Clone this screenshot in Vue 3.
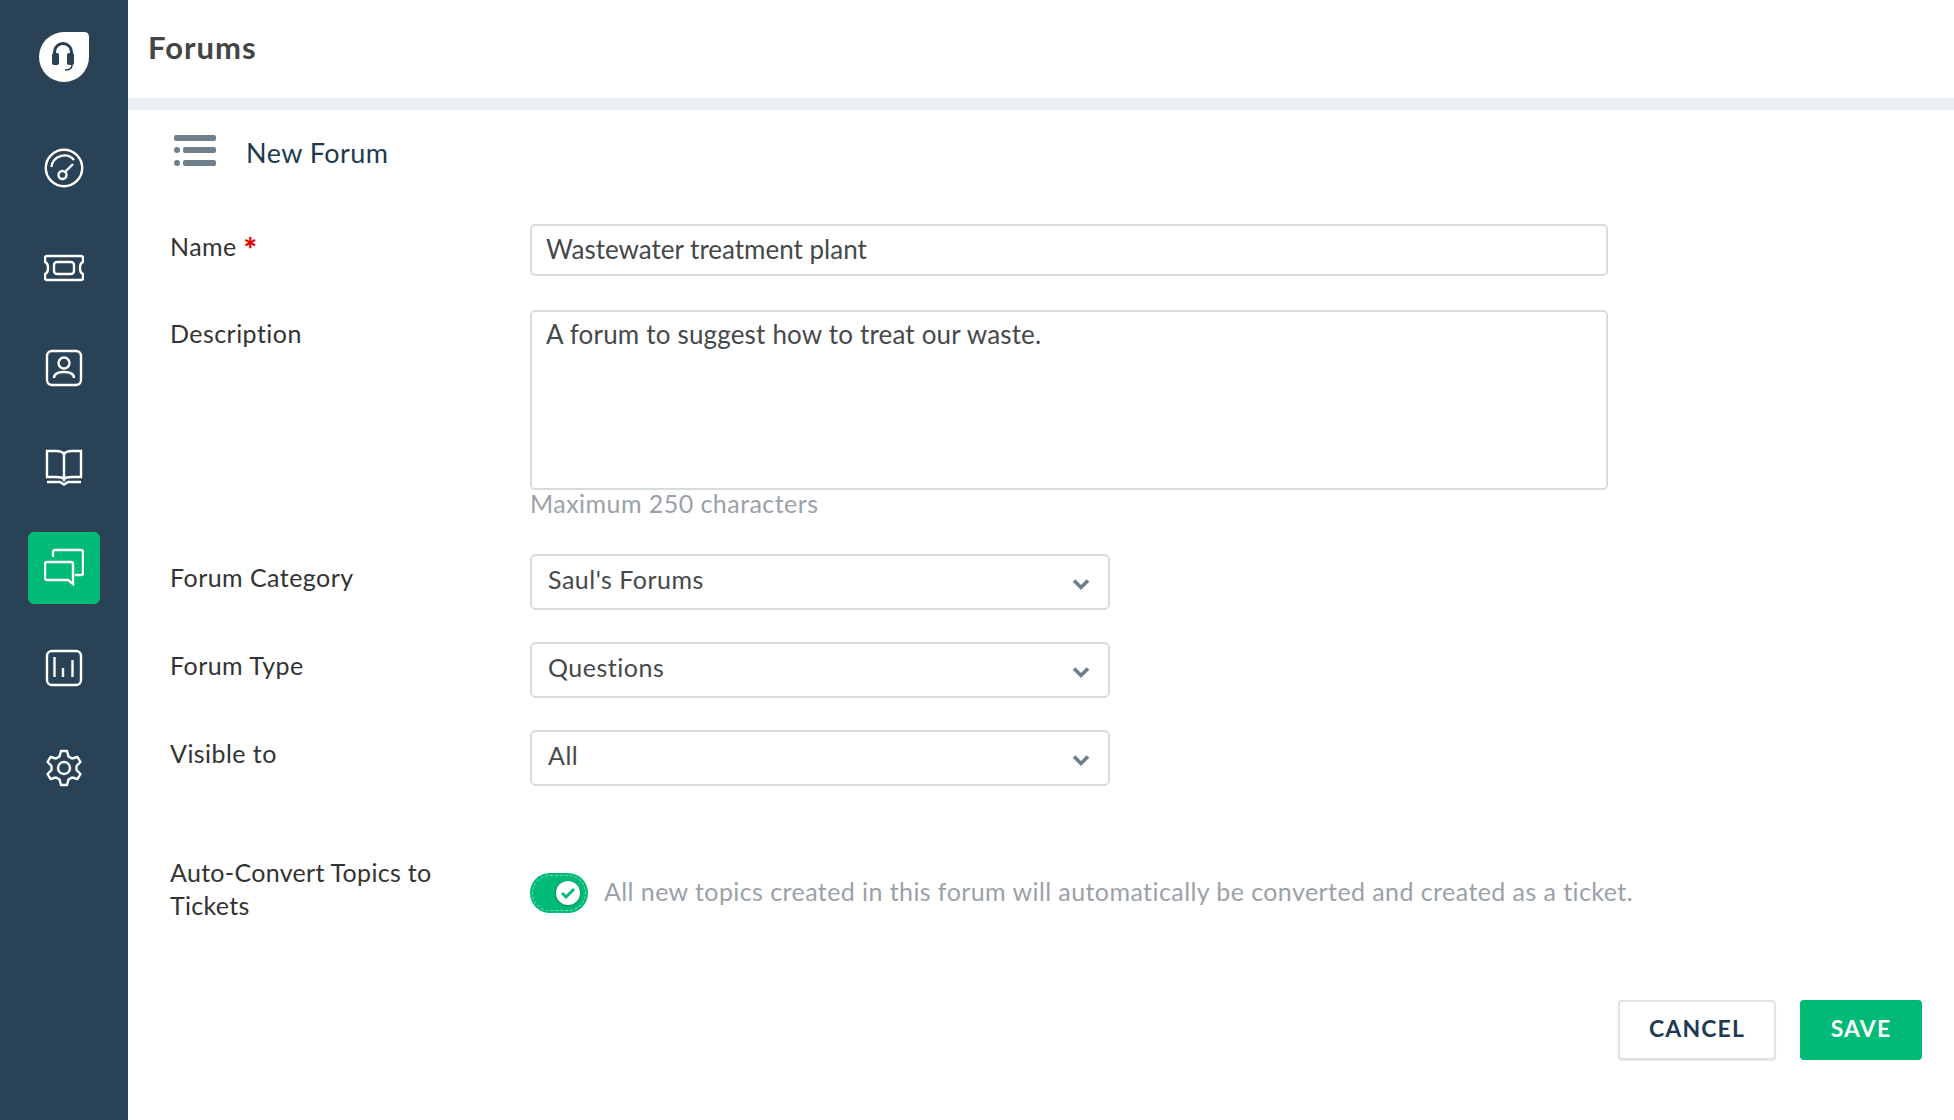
<script setup>
const selects = [
  { label: 'Forum Category', value: "Saul's Forums" },
  { label: 'Forum Type', value: 'Questions' },
  { label: 'Visible to', value: 'All' }
]
</script>

<template>
  <div class="app">
    <aside class="side">
      <div class="logo">
        <svg width="50" height="50" viewBox="0 0 50 50">
          <path d="M25 0H45Q50 0 50 5V25A25 25 0 0 1 0 25A25 25 0 0 1 25 0Z" fill="#fff"/>
          <path d="M15.500 27V20A8.500 8.500 0 0 1 32.500 20V27" fill="none" stroke="#2a4256" stroke-width="3"/>
          <rect x="13" y="21" width="7" height="12" rx="2" fill="#2a4256"/>
          <rect x="28" y="21" width="7" height="12" rx="2" fill="#2a4256"/>
          <path d="M33 33Q33 38 26 38" fill="none" stroke="#2a4256" stroke-width="1.500"/>
        </svg>
      </div>
      <nav class="nav">
        <a class="item">
          <svg class="ic" viewBox="0 0 40 40"><circle cx="20" cy="20" r="18.200"/><path d="M7.500 19A12.800 12.800 0 0 1 30 12"/><circle cx="18.500" cy="27" r="4"/><path d="M21 24L29 16"/></svg>
        </a>
        <a class="item">
          <svg class="ic" viewBox="0 0 40 40"><path d="M3 8H37Q39 8 39 10V14Q36 15 36 20T39 26V30Q39 32 37 32H3Q1 32 1 30V26Q4 25 4 20T1 14V10Q1 8 3 8Z"/><rect x="10" y="14" width="20" height="12" rx="3"/></svg>
        </a>
        <a class="item">
          <svg class="ic" viewBox="0 0 40 40"><rect x="3" y="3" width="34" height="34" rx="5"/><circle cx="20" cy="15" r="5.500"/><path d="M10 30Q10 24 20 24T30 30"/></svg>
        </a>
        <a class="item">
          <svg class="ic" viewBox="0 0 40 40"><path d="M3 3H12Q18 3 20 6V31Q18 29 12 29H3ZM37 3H28Q22 3 20 6V31Q22 29 28 29H37Z"/><path d="M3 34H16L20 36.500L24 34H37"/></svg>
        </a>
        <a class="item active">
          <svg class="ic" viewBox="0 0 40 40"><path d="M9 9V4Q9 2 11 2H37Q39 2 39 4V25Q39 27 37 27H31"/><path d="M3 14H27Q29 14 29 16V36L24 32H3Q1 32 1 30V16Q1 14 3 14Z"/></svg>
        </a>
        <a class="item">
          <svg class="ic" viewBox="0 0 40 40"><rect x="3" y="3" width="34" height="34" rx="5"/><path d="M10.500 9V29M19 20V29M28.500 12V29"/></svg>
        </a>
        <a class="item">
          <svg class="ic" viewBox="0 0 40 40"><circle cx="20" cy="20" r="6"/><path d="M17 3H23L24.500 8.500L28 10.500L33.500 9L36.500 14L32.500 18V22L36.500 26L33.500 31L28 29.500L24.500 31.500L23 37H17L15.500 31.500L12 29.500L6.500 31L3.500 26L7.500 22V18L3.500 14L6.500 9L12 10.500L15.500 8.500Z" stroke-linejoin="round"/></svg>
        </a>
      </nav>
    </aside>

    <main class="main">
      <header class="top"><h1>Forums</h1></header>
      <div class="band"></div>
      <section class="body">
        <div class="subhead">
          <svg width="44" height="32" viewBox="0 0 44 32" class="list">
            <rect x="1" y="0" width="42" height="6" rx="2"/>
            <circle cx="4" cy="15" r="3"/><rect x="10" y="12" width="33" height="6" rx="2"/>
            <circle cx="4" cy="28" r="3"/><rect x="10" y="25" width="33" height="6" rx="2"/>
          </svg>
          <h2>New Forum</h2>
        </div>

        <div class="row r-name">
          <label class="lab">Name <span class="req">*</span></label>
          <div class="field text">Wastewater treatment plant</div>
        </div>

        <div class="row r-desc">
          <label class="lab">Description</label>
          <div>
            <div class="field area">A forum to suggest how to treat our waste.</div>
            <p class="hint">Maximum 250 characters</p>
          </div>
        </div>

        <div v-for="s in selects" :key="s.label" class="row r-sel">
          <label class="lab">{{ s.label }}</label>
          <div class="select">
            <span>{{ s.value }}</span>
            <svg width="18" height="14" viewBox="0 0 18 14"><path d="M2 3.500L9 10.500L16 3.500" fill="none" stroke="#6b7f8e" stroke-width="3.600"/></svg>
          </div>
        </div>

        <div class="row r-auto">
          <label class="lab">Auto-Convert Topics to Tickets</label>
          <div class="auto">
            <div class="toggle">
              <span class="knob">
                <svg width="16" height="14" viewBox="0 0 16 14"><path d="M2 7L6 11L14 3" fill="none" stroke="#00ba75" stroke-width="3"/></svg>
              </span>
            </div>
            <span class="auto-text">All new topics created in this forum will automatically be converted and created as a ticket.</span>
          </div>
        </div>

        <div class="actions">
          <button class="btn cancel">CANCEL</button>
          <button class="btn save">SAVE</button>
        </div>
      </section>
    </main>
  </div>
</template>

<style scoped>
.app { display: flex; width: 1954px; height: 1120px; overflow: hidden; background: #fff; font-family: "Lato", "Liberation Sans", sans-serif; color: #3c4043; }
.side { width: 128px; flex: none; background: #2a4256; display: flex; flex-direction: column; align-items: center; padding-top: 32px; box-sizing: border-box; }
.logo { width: 50px; height: 50px; margin-bottom: 50px; }
.logo svg { display: block; }
.nav { display: flex; flex-direction: column; gap: 28px; }
.item { width: 72px; height: 72px; display: flex; align-items: center; justify-content: center; border-radius: 6px; }
.item.active { background: #00ba75; }
.ic { width: 40px; height: 40px; fill: none; stroke: #fff; stroke-width: 2.400; }
.main { flex: 1; min-width: 0; }
.top { height: 98px; box-sizing: border-box; padding: 28px 0 0 20px; }
h1 { margin: 0; font-size: 31px; line-height: 38px; font-weight: 700; letter-spacing: 1px; color: #444; }
.band { height: 12px; background: #e9edf0; }
.body { padding: 0 32px 0 42px; }
.subhead { display: flex; align-items: center; height: 86px; }
.list { fill: #6f7f8c; margin: -5px 0 0 3px; }
h2 { margin: -2px 0 0 29px; font-size: 27px; font-weight: 400; letter-spacing: 0.45px; color: #1d3a52; }
.row { display: grid; grid-template-columns: 360px 1fr; }
.lab { font-size: 25px; line-height: 33px; letter-spacing: 0.45px; color: #333; display: block; }
.req { color: #e00000; font-weight: 900; font-size: 32px; line-height: 20px; vertical-align: -5px; }
.r-name { margin-top: 28px; }
.r-name .lab { padding-top: 6px; }
.r-desc .lab { padding-top: 7px; }
.field { width: 1078px; box-sizing: border-box; border: 2px solid #d5dcdf; border-radius: 5px; font-size: 26px; color: #46494c; padding: 0 14px; }
.text { height: 52px; line-height: 46px; }
.r-desc { margin-top: 34px; }
.area { height: 180px; padding-top: 4px; line-height: 36px; letter-spacing: 0.18px; }
.hint { margin: -3px 0 3px; font-size: 25px; line-height: 33px; letter-spacing: 0.45px; color: #9aa1a8; }
.r-sel { margin-top: 32px; align-items: start; }
.r-desc + .r-sel { margin-top: 31px; }
.r-sel .lab { padding-top: 7px; }
.select { width: 580px; height: 56px; box-sizing: border-box; border: 2px solid #d5dcdf; border-radius: 6px; display: flex; align-items: center; justify-content: space-between; padding: 0 18px 6px 16px; font-size: 25px; letter-spacing: 0.5px; color: #46494c; }
.select svg { margin-top: 10px; }
.r-auto { margin-top: 70px; align-items: center; }
.r-auto .lab { width: 290px; letter-spacing: 0.3px; }
.auto { display: flex; align-items: center; gap: 16px; padding-top: 3px; }
.toggle { width: 58px; height: 40px; margin-top: 5px; box-sizing: border-box; border-radius: 20px; background: #00ba75; outline: 1px dashed rgba(255, 255, 255, 0.45); outline-offset: -3px; display: flex; align-items: center; justify-content: flex-end; padding-right: 8px; }
.knob { width: 24px; height: 24px; border-radius: 50%; background: #fff; box-shadow: 0 1px 3px rgba(0, 0, 0, 0.25); display: flex; align-items: center; justify-content: center; }
.auto-text { font-size: 25px; letter-spacing: 0.42px; color: #9aa1a8; white-space: nowrap; }
.actions { display: flex; justify-content: flex-end; gap: 24px; margin-top: 78px; }
.btn { height: 60px; border-radius: 4px; font-family: inherit; font-size: 23px; font-weight: 700; letter-spacing: 1.100px; padding: 0 0 4px; }
.cancel { width: 158px; background: #fff; border: 2px solid #dfe3e8; box-shadow: 0 1px 1px #e6e9ec; color: #1d3a52; }
.save { width: 122px; background: #00ba75; border: none; color: #fff; }
</style>
